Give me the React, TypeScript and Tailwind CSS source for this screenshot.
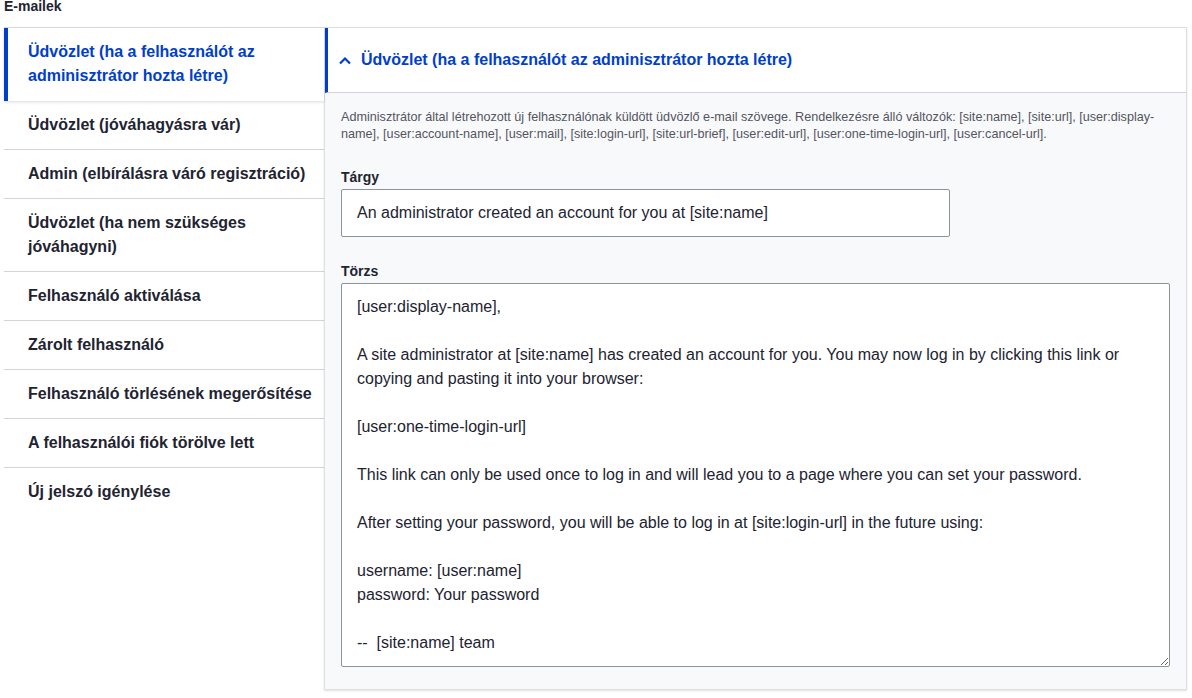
const tabs = [
  "Üdvözlet (ha a felhasználót az adminisztrátor hozta létre)",
  "Üdvözlet (jóváhagyásra vár)",
  "Admin (elbírálásra váró regisztráció)",
  "Üdvözlet (ha nem szükséges jóváhagyni)",
  "Felhasználó aktiválása",
  "Zárolt felhasználó",
  "Felhasználó törlésének megerősítése",
  "A felhasználói fiók törölve lett",
  "Új jelszó igénylése",
];

const body = `[user:display-name],

A site administrator at [site:name] has created an account for you. You may now log in by clicking this link or copying and pasting it into your browser:

[user:one-time-login-url]

This link can only be used once to log in and will lead you to a page where you can set your password.

After setting your password, you will be able to log in at [site:login-url] in the future using:

username: [user:name]
password: Your password

--  [site:name] team`;

const App = () => {
  return (
    <div className="min-h-screen bg-white text-[#222330] font-['Liberation_Sans',Arial,sans-serif]">
      <div className="pl-1 text-[14px] leading-[13px] font-bold">E-mailek</div>

      <div className="mt-[14px] ml-1 mr-[5px] flex">
        {/* tab menu */}
        <ul className="w-[320px] shrink-0 border-t border-[#dedfe4]">
          {tabs.map((label, i) => {
            const selected = i === 0;
            const last = i === tabs.length - 1;
            return (
              <li
                key={i}
                className={
                  selected
                    ? "relative z-10 bg-white border-l-4 border-[#003ecc] pl-5 pr-4 pt-[12px] pb-[13px] text-[16px] leading-6 font-bold text-[#003ecc] shadow-[0_1px_3px_rgba(0,0,0,0.15)]"
                    : `pl-6 pr-3 pt-3 pb-3 text-[16px] leading-6 font-bold border-b ${last ? "border-transparent" : "border-[#d3d4d9]"}`
                }
              >
                {label}
              </li>
            );
          })}
        </ul>

        {/* pane */}
        <div className="flex-1 self-start border border-[#dedfe4] bg-[#f8f9fb] shadow-[0_1px_2px_rgba(0,0,0,0.12)]">
          <div className="h-[65px] flex items-center bg-white border-l-[3px] border-[#003ecc] border-b border-b-[#d3d4d9] pl-[10px] text-[#003ecc]">
            <svg width="14" height="9" viewBox="0 0 14 9" className="mr-[9px]">
              <path d="M2 7.5 L7 2.5 L12 7.5" fill="none" stroke="#003ecc" strokeWidth="2.2" />
            </svg>
            <span className="text-[16px] leading-6 font-bold">
              Üdvözlet (ha a felhasználót az adminisztrátor hozta létre)
            </span>
          </div>

          <div className="px-4 pt-[16px] pb-[22px]">
            <p className="text-[12.64px] leading-[17px] text-[#545560]">
              Adminisztrátor által létrehozott új felhasználónak küldött üdvözlő e-mail szövege. Rendelkezésre álló változók: [site:name], [site:url], [user:display-name], [user:account-name], [user:mail], [site:login-url], [site:url-brief], [user:edit-url], [user:one-time-login-url], [user:cancel-url].
            </p>

            <label className="block mt-[25px] mb-[3px] text-[14px] leading-[18px] font-bold">Tárgy</label>
            <input
              readOnly
              value="An administrator created an account for you at [site:name]"
              className="block w-[609px] h-[48px] px-[15px] bg-white border border-[#8e929c] rounded-[2px] text-[16px] text-[#222330] font-['Liberation_Sans',Arial,sans-serif] outline-none"
            />

            <label className="block mt-[25px] mb-[3px] text-[14px] leading-[18px] font-bold">Törzs</label>
            <textarea
              readOnly
              defaultValue={body}
              className="block w-full h-[384px] pl-[15px] pr-[15px] pt-[11px] pb-[10px] bg-white border border-[#8e929c] rounded-[2px] text-[16px] leading-6 text-[#222330] font-['Liberation_Sans',Arial,sans-serif] outline-none"
            />
          </div>
        </div>
      </div>
    </div>
  );
};

export default App;
